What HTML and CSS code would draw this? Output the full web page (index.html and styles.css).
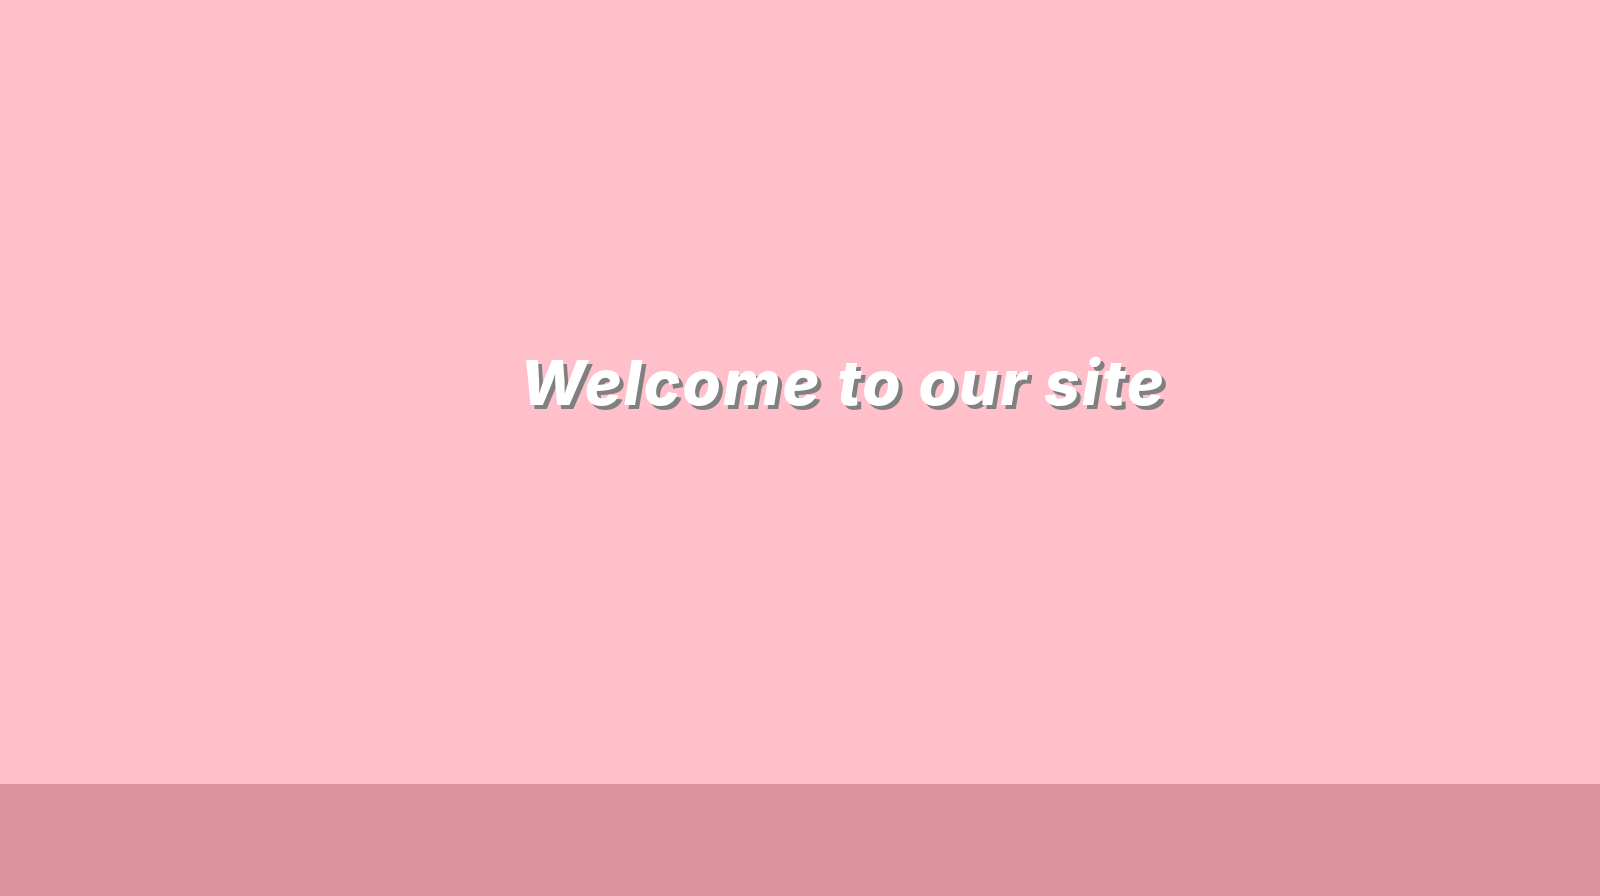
FILE: index.html
```html
<!DOCTYPE html>
<html lang="en">
<head>
<meta charset="utf-8">
<title>Welcome</title>
<link rel="stylesheet" href="styles.css">
</head>
<body>
<main class="hero">
  <h1 class="title">Welcome to our site</h1>
</main>
<footer class="footer"></footer>
</body>
</html>
```
FILE: styles.css
```css
html, body {
  margin: 0;
  padding: 0;
}
body {
  background: #ffc0cb;
  font-family: Inter, "Liberation Sans", Arial, sans-serif;
  height: 896px;
  display: flex;
  flex-direction: column;
}
.hero {
  box-sizing: border-box;
  height: 784px;
  padding: 0 0 20px 86px;
  display: flex;
  align-items: center;
  justify-content: center;
}
.title {
  margin: 0;
  color: #ffffff;
  font-size: 62px;
  font-weight: 800;
  font-style: oblique;
  letter-spacing: 2.1px;
  text-shadow: 4px 4px 0 #808080;
}
.footer {
  flex: 1;
  background: #db939e;
}
```
